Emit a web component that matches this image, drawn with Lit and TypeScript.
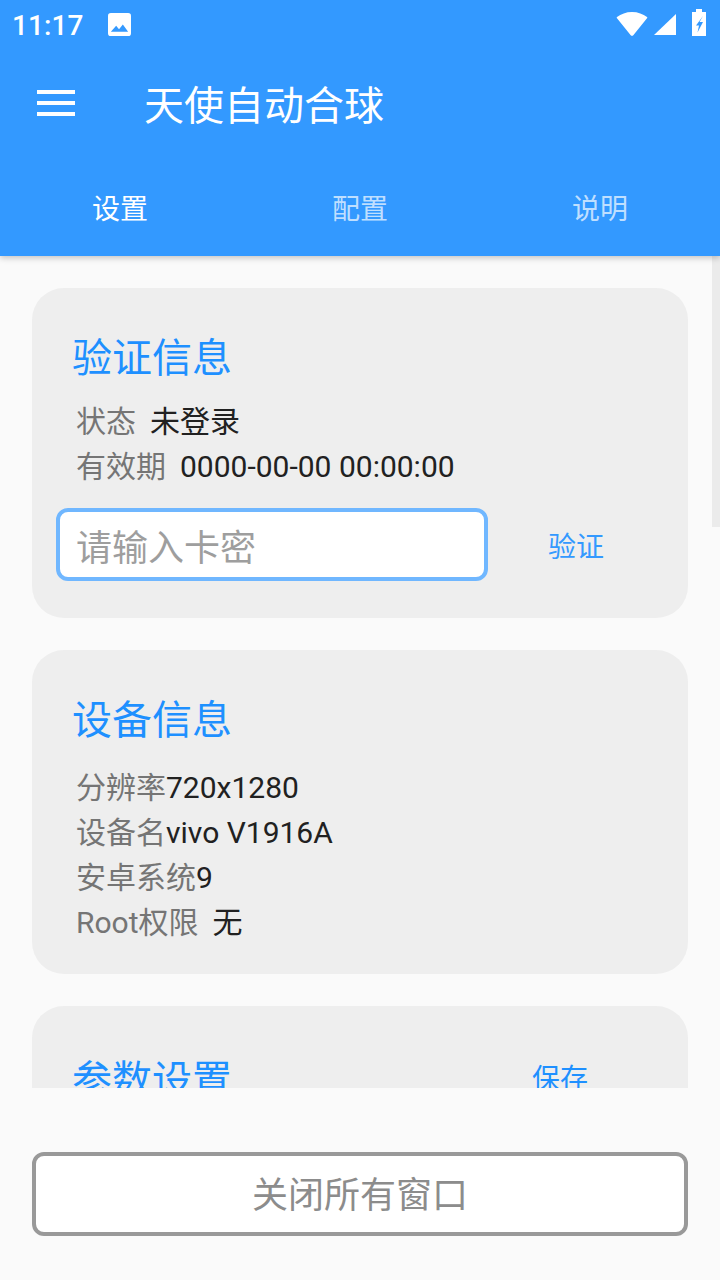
import { LitElement, html, css } from "lit";
import { customElement } from "lit/decorators.js";

@customElement("app-root")
export class AppRoot extends LitElement {
  static styles = css`
    :host {
      display: block;
      width: 720px;
      height: 1280px;
      overflow: hidden;
      background: #fafafa;
      font-family: Roboto, "Noto Sans CJK SC", sans-serif;
      color: #212121;
    }
    .header {
      background: #3399ff;
      height: 256px;
      color: #fff;
      display: flex;
      flex-direction: column;
      box-shadow: 0 2px 6px rgba(0, 0, 0, 0.22);
      position: relative;
      z-index: 2;
    }
    .status {
      height: 48px;
      display: flex;
      align-items: center;
      padding: 0 14px 0 12px;
      font-size: 28px;
      font-weight: 500;
    }
    .time { width: 96px; line-height: 48px; padding-top: 3px; letter-spacing: 0.1px; }
    .status svg { display: block; flex: none; }
    .sp { flex: 1; }
    .wifi { margin-right: 6px; }
    .signal { margin: 1px 16px 0 0; }
    .batt { margin-top: -3px; }
    .toolbar {
      height: 112px;
      display: flex;
      align-items: center;
      padding-left: 37px;
      font-size: 40px;
    }
    .toolbar .title { margin-left: 69px; padding-top: 6px; line-height: 112px; }
    .burger {
      width: 38px;
      height: 26px;
      display: flex;
      flex-direction: column;
      justify-content: space-between;
      margin-top: -2px;
    }
    .burger i { display: block; height: 4px; background: #fff; }
    .tabs { display: flex; height: 96px; }
    .tab {
      flex: 1;
      text-align: center;
      line-height: 100px;
      font-size: 28px;
      color: rgba(255, 255, 255, 0.7);
    }
    .tab.on { color: #fff; }
    .main {
      height: 832px;
      overflow: hidden;
      position: relative;
      padding: 32px 32px 0;
      box-sizing: border-box;
      display: flex;
      flex-direction: column;
      gap: 32px;
    }
    .thumb {
      position: absolute;
      right: 0;
      top: 0;
      width: 8px;
      height: 271px;
      background: #ebebeb;
    }
    .card {
      background: #eeeeee;
      border-radius: 32px;
      flex: none;
      box-sizing: border-box;
      padding: 0 24px 0 40px;
    }
    .c1 { height: 330px; }
    .c2 { height: 324px; }
    .c3 { height: 200px; }
    .head {
      display: flex;
      justify-content: space-between;
      color: #1e90ff;
      font-size: 40px;
      line-height: 56px;
      padding-top: 43px;
    }
    .c3 .head { padding-top: 47px; }
    .save { font-size: 28px; line-height: 54px; margin-right: 76px; }
    .rows { padding-left: 4px; font-size: 30px; line-height: 45px; }
    .c1 .rows { margin-top: 12px; }
    .c2 .rows { margin-top: 16px; }
    .k { color: #757575; }
    .gap { margin-left: 14px; }
    .form {
      display: flex;
      align-items: center;
      margin: 19px 0 0 -16px;
    }
    .input {
      width: 432px;
      height: 73px;
      flex: none;
      box-sizing: border-box;
      background: #fff;
      border: 4px solid #70b7ff;
      border-radius: 12px;
      padding-left: 16px;
      font-size: 36px;
      line-height: 74px;
      color: #9e9e9e;
      overflow: hidden;
    }
    .verify {
      margin-left: 60px;
      font-size: 28px;
      color: #3399ff;
    }
    .footer {
      height: 192px;
      padding: 64px 32px 0;
      box-sizing: border-box;
    }
    .close {
      height: 84px;
      box-sizing: border-box;
      border: 4px solid #999999;
      border-radius: 12px;
      background: #fff;
      text-align: center;
      line-height: 80px;
      font-size: 36px;
      color: #8c8c8c;
      overflow: hidden;
    }
  `;

  render() {
    return html`
      <div class="header">
        <div class="status">
          <span class="time">11:17</span>
          <svg width="23" height="23" viewBox="0 0 24 24">
            <path fill="#fff" fill-rule="evenodd" d="M3 0h18a3 3 0 0 1 3 3v18a3 3 0 0 1-3 3H3a3 3 0 0 1-3-3V3a3 3 0 0 1 3-3zM3 19.500h18l-5.500-7.500-4 5-3-3.800z"/>
          </svg>
          <span class="sp"></span>
          <svg class="wifi" width="32" height="24" viewBox="0 0 32 24">
            <path fill="#fff" d="M16 0C10 0 5 2 1 5a1 1 0 0 0 0 1.300L14.500 23a2 2 0 0 0 3 0L31 6.300a1 1 0 0 0 0-1.300C27 2 22 0 16 0z"/>
          </svg>
          <svg class="signal" width="22" height="21" viewBox="0 0 22 21"><path fill="#fff" d="M22 0v21H0z"/></svg>
          <svg class="batt" width="14" height="27" viewBox="0 0 14 27">
            <path fill="#fff" fill-rule="evenodd" d="M4 3V0h6v3h4v24H0V3zM11 7L4 16.500H7L5.500 23.500 11 13H7.500z"/>
          </svg>
        </div>
        <div class="toolbar">
          <div class="burger"><i></i><i></i><i></i></div>
          <div class="title">天使自动合球</div>
        </div>
        <div class="tabs">
          <div class="tab on">设置</div>
          <div class="tab">配置</div>
          <div class="tab">说明</div>
        </div>
      </div>
      <div class="main">
        <div class="thumb"></div>
        <section class="card c1">
          <div class="head"><span>验证信息</span></div>
          <div class="rows">
            <div><span class="k">状态</span><span class="gap">未登录</span></div>
            <div><span class="k">有效期</span><span class="gap">0000-00-00 00:00:00</span></div>
          </div>
          <div class="form">
            <div class="input">请输入卡密</div>
            <div class="verify">验证</div>
          </div>
        </section>
        <section class="card c2">
          <div class="head"><span>设备信息</span></div>
          <div class="rows">
            <div><span class="k">分辨率</span>720x1280</div>
            <div><span class="k">设备名</span>vivo V1916A</div>
            <div><span class="k">安卓系统</span>9</div>
            <div><span class="k">Root权限</span><span class="gap">无</span></div>
          </div>
        </section>
        <section class="card c3">
          <div class="head"><span>参数设置</span><span class="save">保存</span></div>
        </section>
      </div>
      <div class="footer"><div class="close">关闭所有窗口</div></div>
    `;
  }
}
